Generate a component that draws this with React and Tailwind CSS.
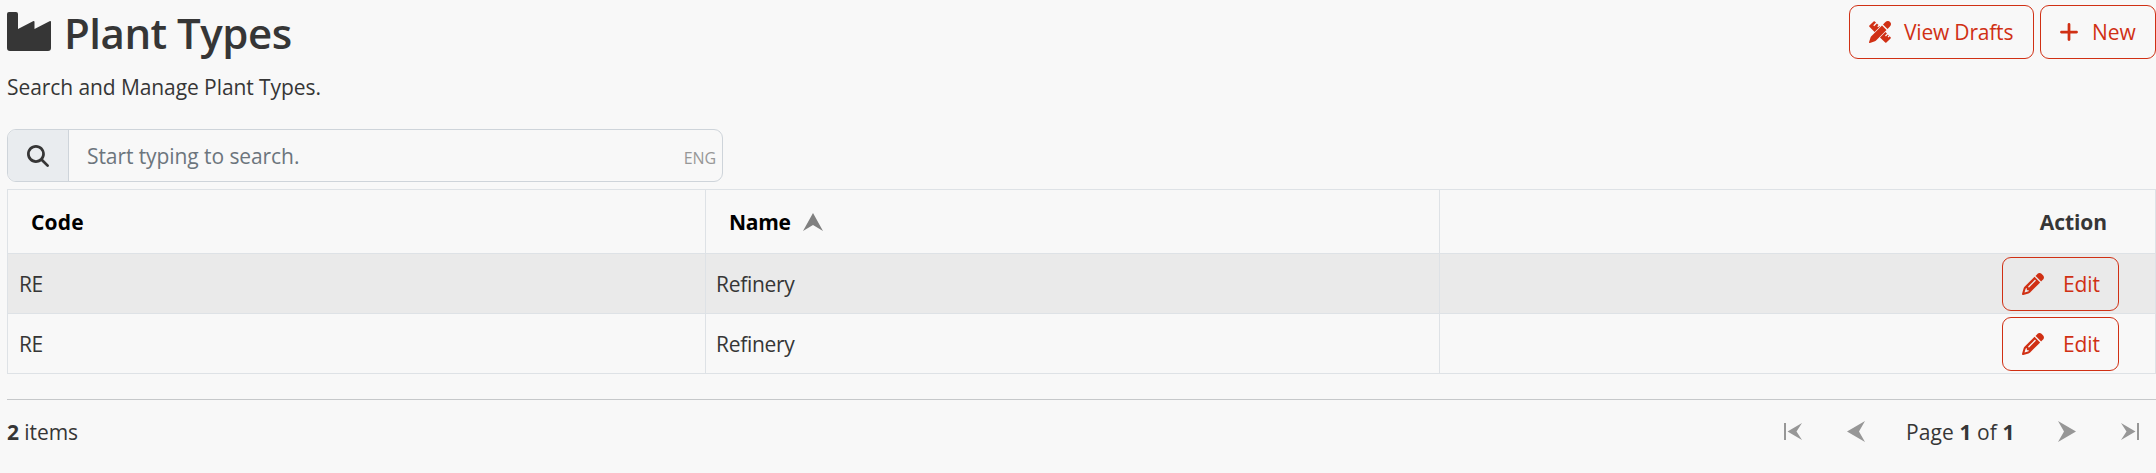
import { FaMagnifyingGlass, FaPlus, FaPencil } from "react-icons/fa6";

const rows = [
  { code: "RE", name: "Refinery" },
  { code: "RE", name: "Refinery" },
];

function Industry() {
  return (
    <svg className="h-[39px] w-[44px] shrink-0" viewBox="0 0 44 39" fill="#363636">
      <path d="M2 0H9Q11 0 11 2V17L26 9.200Q27.500 8.500 27.500 10V17L42.500 9.200Q44 8.500 44 10V36Q44 39 41 39H3Q0 39 0 36V2Q0 0 2 0Z" />
    </svg>
  );
}

function PencilRuler() {
  return (
    <svg className="size-[22px] shrink-0" viewBox="0 0 22 22" fill="currentColor">
      <path d="M0.400 4.600L4.600 0.400Q5.200 -0.100 5.800 0.400L7 1.600L4.300 4.300L5.200 5.200L7.900 2.500L9.500 4.100L8.300 5.300L9.200 6.200L10.400 5L11 5.600L5.600 11L0.400 5.800Q-0.100 5.200 0.400 4.600Z" />
      <path d="M16.400 11L18 12.600L16 14.600L16.900 15.500L18.900 13.500L19.800 14.400L18.600 15.600L19.500 16.500L20.700 15.300L21.600 16.200Q22.100 16.800 21.600 17.400L17.400 21.600Q16.800 22.100 16.200 21.600L11 16.400Z" />
      <path d="M13 4.500L17.500 9L6.800 19.700Q6.400 20.100 5.900 20.300L0.900 21.900Q-0.100 22.100 0.100 21.100L1.700 16.100Q1.900 15.600 2.300 15.200Z" />
      <path d="M14 3.500L16.200 1.300Q18.800 -1.100 21.100 0.900Q23.100 3.200 20.700 5.800L18.500 8Z" />
    </svg>
  );
}

function ActionButton({ className, children }) {
  return (
    <button className={"flex h-[54px] items-center rounded-[9px] border border-[#d03014] text-[#d03014] " + className}>
      {children}
    </button>
  );
}

function Arrow({ className, bar }) {
  return (
    <svg className={"shrink-0 " + className} viewBox="0 0 18 21" preserveAspectRatio="none" fill="#979797">
      {bar ? (
        <>
          <path d="M0 2H2V19H0Z" />
          <path d="M18 2L12.500 10.500L18 19L3.500 10.500Z" />
        </>
      ) : (
        <path d="M18 0L12 10.500L18 21L0 10.500Z" />
      )}
    </svg>
  );
}

export default function App() {
  return (
    <div className="h-[473px] overflow-hidden bg-[#f8f8f8] pl-[7px] font-['Open_Sans',sans-serif] text-[21px] leading-[32px] tracking-[-0.08px] text-[#363636]">
      <header className="flex h-[124px] justify-between">
        <div className="pt-[5px]">
          <h1 className="flex h-[58px] items-start text-[42px] leading-[56px] font-semibold">
            <span className="mt-[7px]"><Industry /></span>
            <span className="ml-[13px] tracking-[-0.5px] whitespace-nowrap">Plant Types</span>
          </h1>
          <p className="mt-[8px]">Search and Manage Plant Types.</p>
        </div>
        <div className="flex gap-[6px] pt-[5px]">
          <ActionButton className="w-[185px] pl-[19px]">
            <PencilRuler />
            <span className="ml-[13px] tracking-[-0.2px] whitespace-nowrap">View Drafts</span>
          </ActionButton>
          <ActionButton className="w-[116px] pl-[17px]">
            <FaPlus className="size-[22px]" />
            <span className="ml-[12px]">New</span>
          </ActionButton>
        </div>
      </header>

      <div className="mt-[5px] flex h-[53px] w-[716px] items-center overflow-hidden rounded-[9px] border border-[#ced4da]">
        <div className="flex h-full w-[61px] items-center justify-center border-r border-[#ced4da] bg-[#e9ecef]">
          <FaMagnifyingGlass className="size-[22px]" />
        </div>
        <span className="ml-[18px] flex-1 text-[#6c757d]">Start typing to search.</span>
        <span className="mr-[6px] pt-[4px] text-[16px] text-[#979797]">ENG</span>
      </div>

      <table className="mt-[7px] w-[2149px] table-fixed border-collapse border border-[#dee2e6]">
        <colgroup>
          <col className="w-[698px]" />
          <col className="w-[734px]" />
          <col />
        </colgroup>
        <thead>
          <tr className="h-[64px] text-left font-bold text-black">
            <th className="border border-[#dee2e6] p-0 pl-[23px] tracking-[0.2px]">Code</th>
            <th className="border border-[#dee2e6] p-0 pl-[23px]">
              <div className="flex items-center">
                <span className="tracking-[-0.3px]">Name</span>
                <svg className="ml-[12px] h-[18px] w-[20px]" viewBox="0 0 20 18" fill="#808080">
                  <path d="M10 0L20 18L10 12L0 18Z" />
                </svg>
              </div>
            </th>
            <th className="border border-[#dee2e6] p-0 pr-[48px] text-right text-[#363636]">Action</th>
          </tr>
        </thead>
        <tbody>
          {rows.map((row, i) => (
            <tr key={i} className="h-[60px] odd:bg-[#eaeaea]">
              <td className="border border-[#dee2e6] p-0 pl-[11px] tracking-[-0.5px]">{row.code}</td>
              <td className="border border-[#dee2e6] p-0 pl-[10px] tracking-[-0.3px]">{row.name}</td>
              <td className="border border-[#dee2e6] p-0 pr-[36px]">
                <div className="flex justify-end">
                  <ActionButton className="w-[117px] pl-[19px]">
                    <FaPencil className="size-[22px]" />
                    <span className="ml-[19px]">Edit</span>
                  </ActionButton>
                </div>
              </td>
            </tr>
          ))}
        </tbody>
      </table>

      <footer className="mt-[25px] flex h-[64px] items-center justify-between border-t border-[#c6c8ca]">
        <span><b>2</b> items</span>
        <nav className="flex items-center pr-[17px]">
          <Arrow className="h-[21px] w-[18px]" bar />
          <Arrow className="ml-[45px] h-[21px] w-[18px]" />
          <span className="ml-[41px] w-[109px] tracking-[0.1px] whitespace-nowrap">Page <b>1</b> of <b>1</b></span>
          <Arrow className="ml-[43px] h-[21px] w-[18px] -scale-x-100" />
          <Arrow className="ml-[45px] h-[21px] w-[18px] -scale-x-100" bar />
        </nav>
      </footer>
    </div>
  );
}
